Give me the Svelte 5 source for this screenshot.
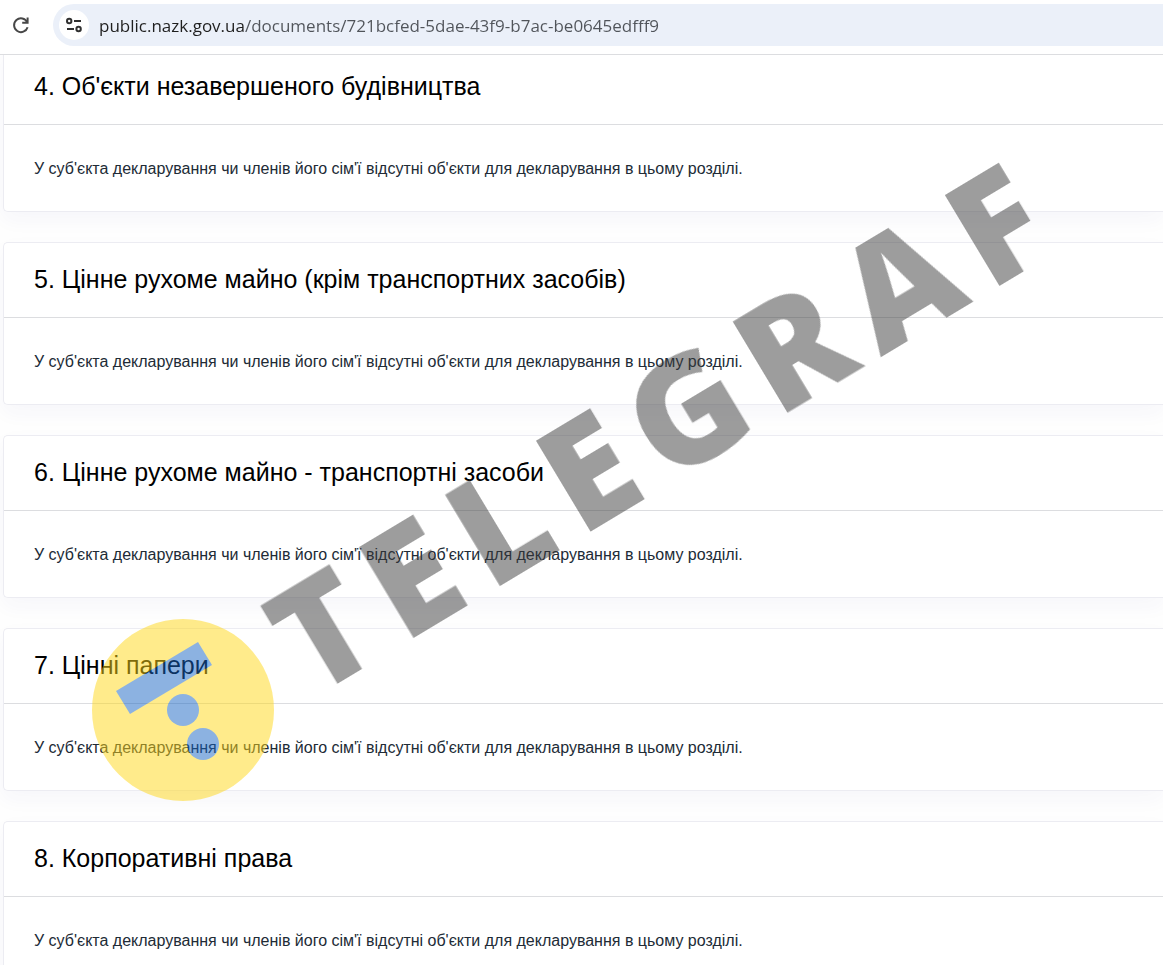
<script lang="ts">
  let url = 'public.nazk.gov.ua/documents/721bcfed-5dae-43f9-b7ac-be0645edfff9';

  const emptyText =
    "У суб'єкта декларування чи членів його сім'ї відсутні об'єкти для декларування в цьому розділі.";

  const sections = [
    { id: 4, title: "Об'єкти незавершеного будівництва" },
    { id: 5, title: 'Цінне рухоме майно (крім транспортних засобів)' },
    { id: 6, title: 'Цінне рухоме майно - транспортні засоби' },
    { id: 7, title: 'Цінні папери' },
    { id: 8, title: 'Корпоративні права' }
  ];
</script>

<div class="window">
  <header class="toolbar">
    <button class="reload" aria-label="Reload">
      <svg width="24" height="24" viewBox="0 0 24 24" fill="none" stroke="#474747" stroke-width="2">
        <path d="M18.2 9.2A6.9 6.9 0 1 0 18.6 14.2" />
        <path d="M18.6 4.6V9.8H13.2" />
      </svg>
    </button>
    <div class="address">
      <button class="site-info" aria-label="Site information">
        <svg width="20" height="20" viewBox="0 0 20 20" fill="none" stroke="#303030" stroke-width="2">
          <circle cx="5.2" cy="6" r="2.2" />
          <path d="M10 6H17M3 14H10" />
          <circle cx="14.6" cy="14" r="2.2" />
        </svg>
      </button>
      <input class="url" type="text" aria-label="Address" bind:value={url} />
    </div>
  </header>

  <main class="sections">
    {#each sections as section (section.id)}
      <section class="card">
        <h2>{section.id}. {section.title}</h2>
        <p>{emptyText}</p>
      </section>
    {/each}
  </main>

  <svg class="watermark" width="1163" height="965" viewBox="0 0 1163 965" aria-hidden="true">
    <g opacity="0.5">
      <circle cx="183" cy="710" r="91" fill="#ffd717" />
      <path d="M116 691L198 642L212 665L130 714Z" fill="#1965c3" />
      <circle cx="183" cy="710" r="16" fill="#1965c3" />
      <circle cx="203" cy="744" r="16" fill="#1965c3" />
      <text class="brand" transform="translate(312 699) rotate(-31)">TELEGRAF</text>
    </g>
  </svg>
</div>

<style>
  :global(body) {
    margin: 0;
    background: #fff;
  }

  .window {
    position: relative;
    height: 100vh;
    overflow: hidden;
    background: #fefefe;
    font-family: 'Liberation Sans', Arial, sans-serif;
  }

  .toolbar {
    position: relative;
    z-index: 1;
    display: flex;
    align-items: flex-start;
    gap: 20px;
    height: 50px;
    padding: 4px 0 0 8px;
    background: #fff;
    border-bottom: 1px solid #dcdde0;
  }

  button {
    display: flex;
    align-items: center;
    justify-content: center;
    padding: 0;
    border: 0;
    background: none;
    cursor: pointer;
  }

  .reload {
    width: 25px;
    height: 42px;
  }

  .address {
    flex: 1;
    display: flex;
    align-items: center;
    gap: 10px;
    height: 42px;
    padding-left: 6px;
    background: #ebf0f9;
    border-radius: 21px 0 0 21px;
  }

  .site-info {
    width: 30px;
    height: 30px;
    border-radius: 50%;
    background: #fff;
  }

  .url {
    flex: 1;
    min-width: 0;
    padding: 2px 0 0;
    border: 0;
    outline: 0;
    font-family: 'Open Sans', 'Noto Sans', sans-serif;
    font-size: 17px;
    line-height: 24px;
    color: transparent;
    /* host is darker than the path */
    background: linear-gradient(to right, #1f1f1f 146px, #50545a 146px);
    background-clip: text;
    -webkit-background-clip: text;
  }

  .sections {
    display: flex;
    flex-direction: column;
    gap: 30px;
    margin-top: -6px;
    padding-left: 3px;
  }

  .card {
    border: 1px solid #ececf2;
    border-right: 0;
    border-radius: 5px 0 0 5px;
    background: #fff;
    box-shadow: 0 8px 20px rgba(60, 60, 150, 0.04);
  }

  h2 {
    margin: 0;
    padding: 21px 30px 23px;
    border-bottom: 1px solid #dcdde0;
    font-size: 25px;
    font-weight: 400;
    line-height: 30px;
    color: #000;
  }

  p {
    margin: 0;
    padding: 34px 30px 32px;
    font-size: 16px;
    line-height: 20px;
    color: #212b36;
  }

  .watermark {
    position: absolute;
    top: 0;
    left: 0;
    z-index: 2;
    pointer-events: none;
  }

  .brand {
    font-family: 'Open Sans', sans-serif;
    font-size: 149px;
    font-weight: 800;
    letter-spacing: 19px;
    fill: #3b3b3b;
  }
</style>
